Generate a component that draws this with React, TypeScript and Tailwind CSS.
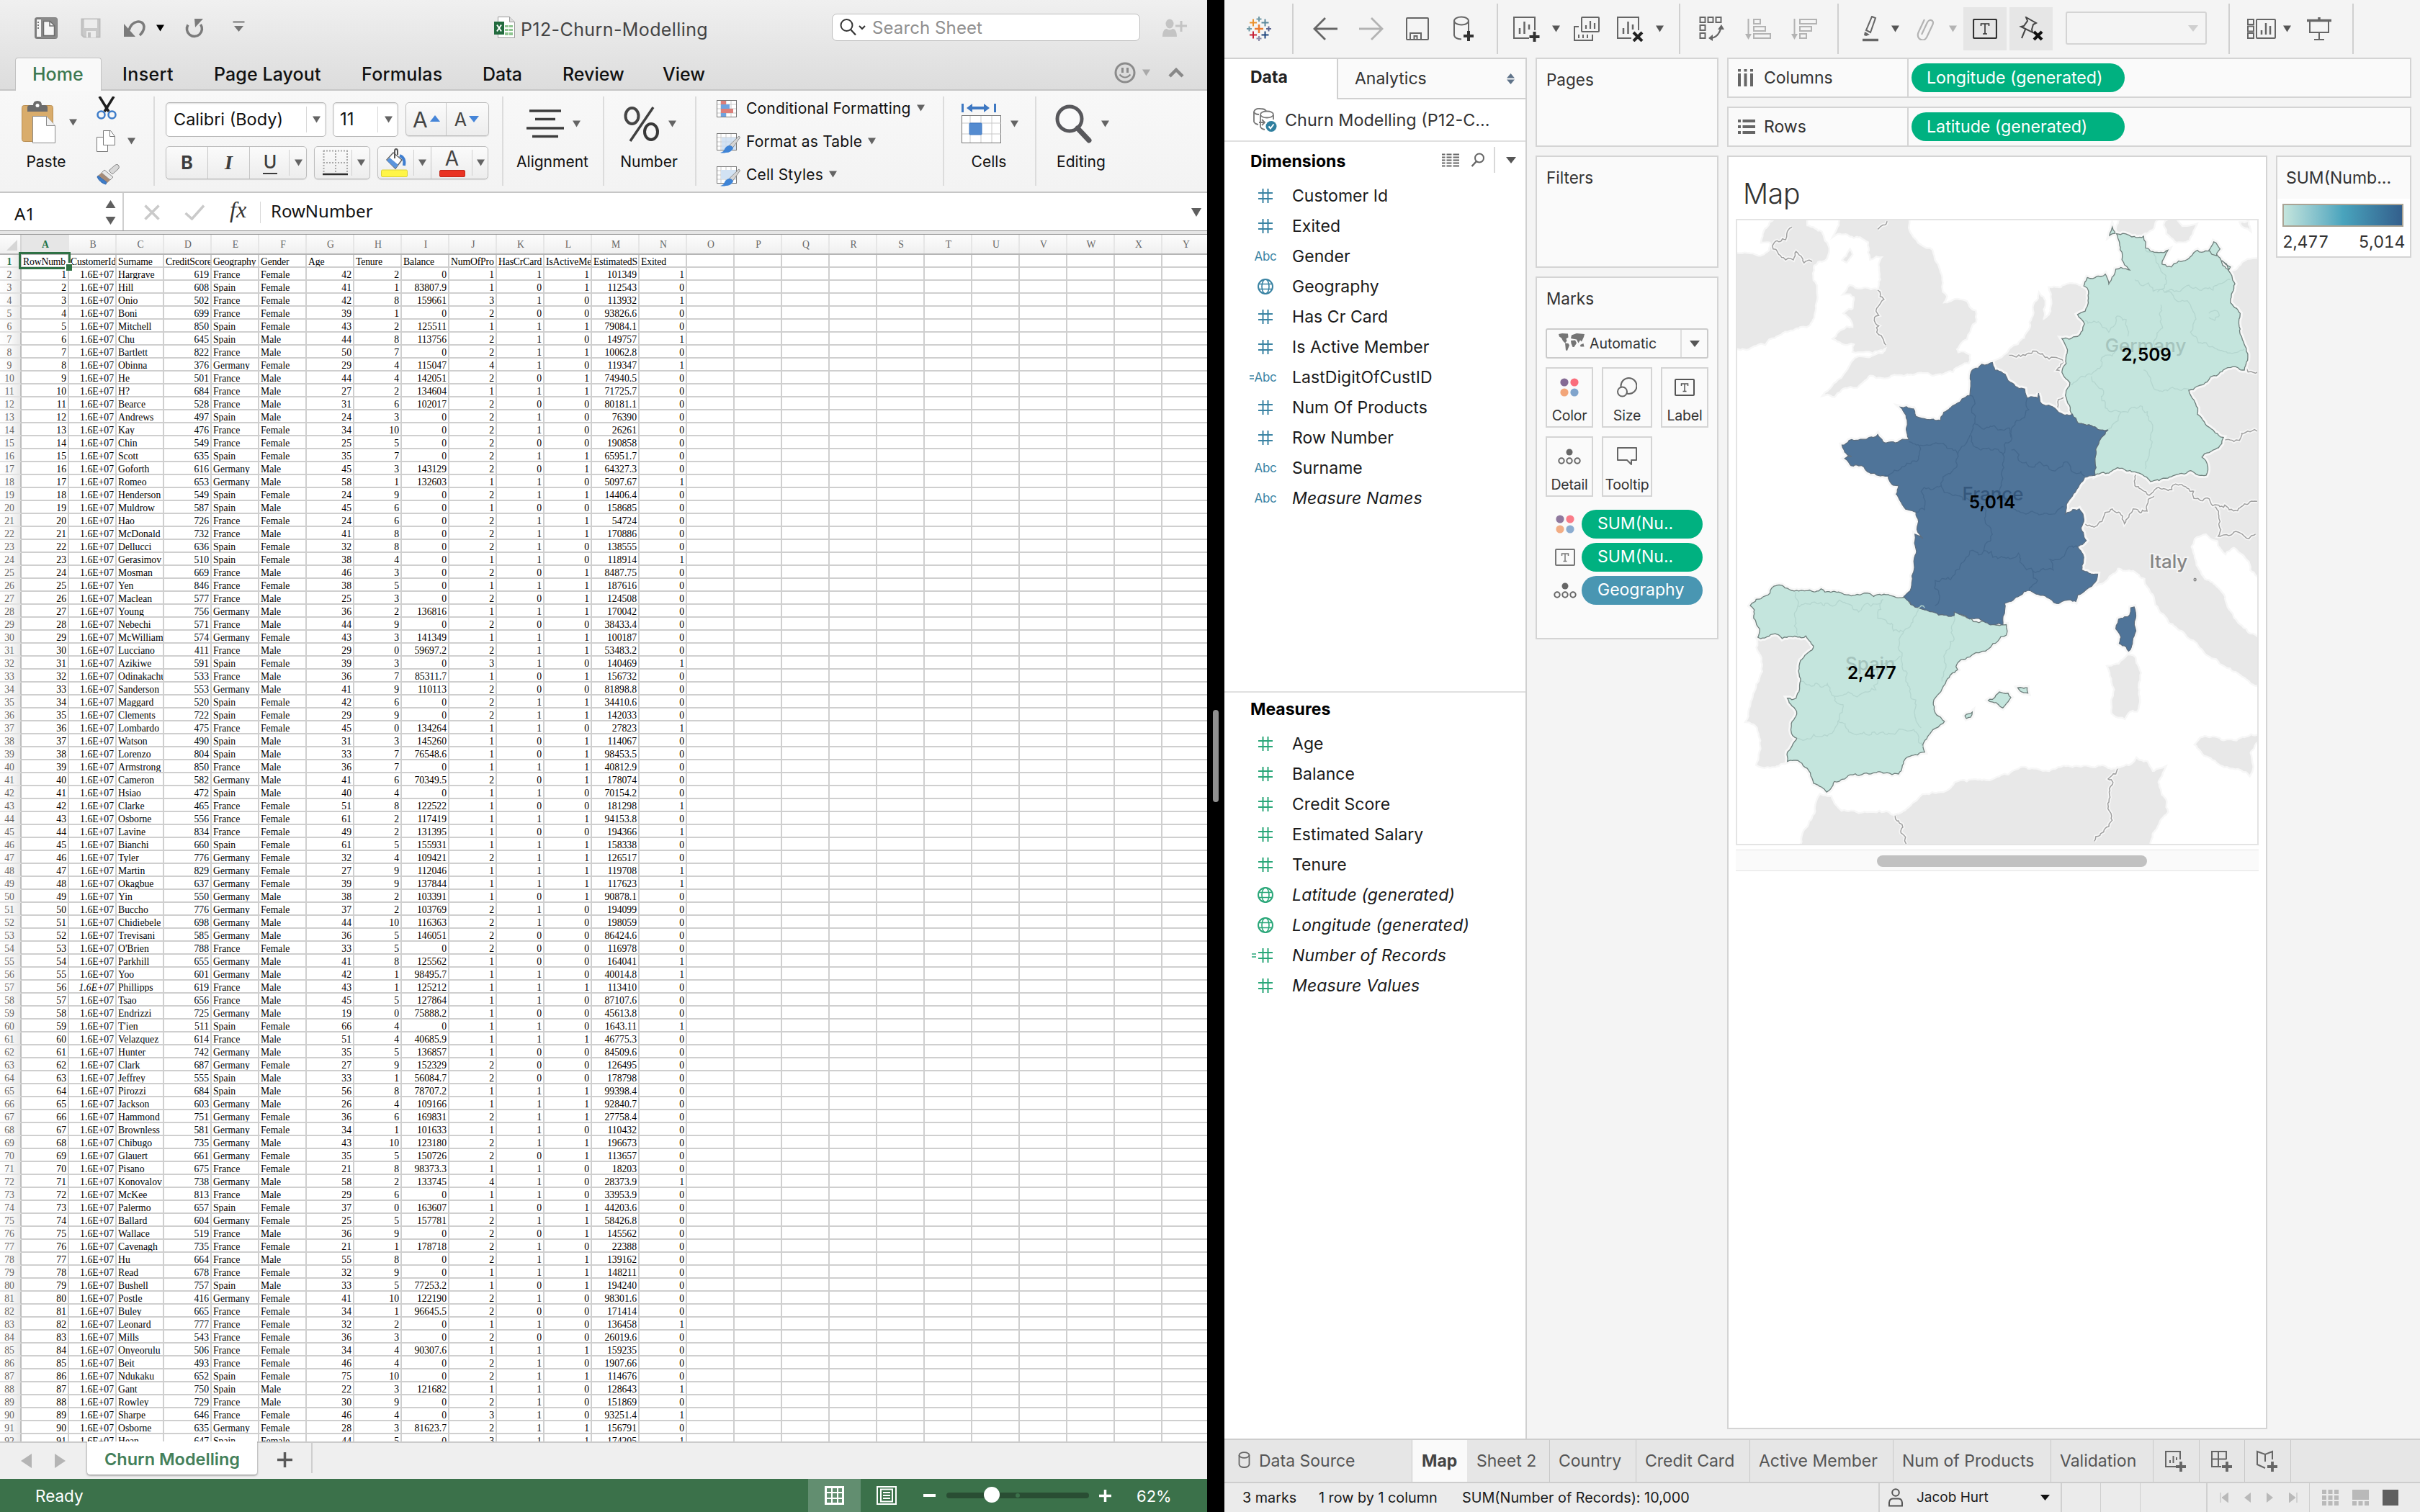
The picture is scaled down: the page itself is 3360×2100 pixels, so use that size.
import React from "react";

/* ------------------------------------------------------------------ */
/* Data                                                                */
/* ------------------------------------------------------------------ */

const HEADERS = ["RowNumb", "CustomerId", "Surname", "CreditScore", "Geography", "Gender", "Age", "Tenure", "Balance", "NumOfPro", "HasCrCard", "IsActiveMe", "EstimatedS", "Exited"];

const RAW = `Hargrave,619,F,F,42,2,0,1,1,1,101349,1
Hill,608,S,F,41,1,83807.9,1,0,1,112543,0
Onio,502,F,F,42,8,159661,3,1,0,113932,1
Boni,699,F,F,39,1,0,2,0,0,93826.6,0
Mitchell,850,S,F,43,2,125511,1,1,1,79084.1,0
Chu,645,S,M,44,8,113756,2,1,0,149757,1
Bartlett,822,F,M,50,7,0,2,1,1,10062.8,0
Obinna,376,G,F,29,4,115047,4,1,0,119347,1
He,501,F,M,44,4,142051,2,0,1,74940.5,0
H?,684,F,M,27,2,134604,1,1,1,71725.7,0
Bearce,528,F,M,31,6,102017,2,0,0,80181.1,0
Andrews,497,S,M,24,3,0,2,1,0,76390,0
Kay,476,F,F,34,10,0,2,1,0,26261,0
Chin,549,F,F,25,5,0,2,0,0,190858,0
Scott,635,S,F,35,7,0,2,1,1,65951.7,0
Goforth,616,G,M,45,3,143129,2,0,1,64327.3,0
Romeo,653,G,M,58,1,132603,1,1,0,5097.67,1
Henderson,549,S,F,24,9,0,2,1,1,14406.4,0
Muldrow,587,S,M,45,6,0,1,0,0,158685,0
Hao,726,F,F,24,6,0,2,1,1,54724,0
McDonald,732,F,M,41,8,0,2,1,1,170886,0
Dellucci,636,S,F,32,8,0,2,1,0,138555,0
Gerasimov,510,S,F,38,4,0,1,1,0,118914,1
Mosman,669,F,M,46,3,0,2,0,1,8487.75,0
Yen,846,F,F,38,5,0,1,1,1,187616,0
Maclean,577,F,M,25,3,0,2,0,1,124508,0
Young,756,G,M,36,2,136816,1,1,1,170042,0
Nebechi,571,F,M,44,9,0,2,0,0,38433.4,0
McWilliam,574,G,F,43,3,141349,1,1,1,100187,0
Lucciano,411,F,M,29,0,59697.2,2,1,1,53483.2,0
Azikiwe,591,S,F,39,3,0,3,1,0,140469,1
Odinakachu,533,F,M,36,7,85311.7,1,0,1,156732,0
Sanderson,553,G,M,41,9,110113,2,0,0,81898.8,0
Maggard,520,S,F,42,6,0,2,1,1,34410.6,0
Clements,722,S,F,29,9,0,2,1,1,142033,0
Lombardo,475,F,F,45,0,134264,1,1,0,27823,1
Watson,490,S,M,31,3,145260,1,0,1,114067,0
Lorenzo,804,S,M,33,7,76548.6,1,0,1,98453.5,0
Armstrong,850,F,M,36,7,0,1,1,1,40812.9,0
Cameron,582,G,M,41,6,70349.5,2,0,1,178074,0
Hsiao,472,S,M,40,4,0,1,1,0,70154.2,0
Clarke,465,F,F,51,8,122522,1,0,0,181298,1
Osborne,556,F,F,61,2,117419,1,1,1,94153.8,0
Lavine,834,F,F,49,2,131395,1,0,0,194366,1
Bianchi,660,S,F,61,5,155931,1,1,1,158338,0
Tyler,776,G,F,32,4,109421,2,1,1,126517,0
Martin,829,G,F,27,9,112046,1,1,1,119708,1
Okagbue,637,G,F,39,9,137844,1,1,1,117623,1
Yin,550,G,M,38,2,103391,1,0,1,90878.1,0
Buccho,776,G,F,37,2,103769,2,1,0,194099,0
Chidiebele,698,G,M,44,10,116363,2,1,0,198059,0
Trevisani,585,G,M,36,5,146051,2,0,0,86424.6,0
O'Brien,788,F,F,33,5,0,2,0,0,116978,0
Parkhill,655,G,M,41,8,125562,1,0,0,164041,1
Yoo,601,G,M,42,1,98495.7,1,1,0,40014.8,1
Phillipps,619,F,M,43,1,125212,1,1,1,113410,0
Tsao,656,F,M,45,5,127864,1,1,0,87107.6,0
Endrizzi,725,G,M,19,0,75888.2,1,0,0,45613.8,0
T'ien,511,S,F,66,4,0,1,1,0,1643.11,1
Velazquez,614,F,M,51,4,40685.9,1,1,1,46775.3,0
Hunter,742,G,M,35,5,136857,1,0,0,84509.6,0
Clark,687,G,F,27,9,152329,2,0,0,126495,0
Jeffrey,555,S,M,33,1,56084.7,2,0,0,178798,0
Pirozzi,684,S,M,56,8,78707.2,1,1,1,99398.4,0
Jackson,603,G,M,26,4,109166,1,1,1,92840.7,0
Hammond,751,G,F,36,6,169831,2,1,1,27758.4,0
Brownless,581,G,F,34,1,101633,1,1,0,110432,0
Chibugo,735,G,M,43,10,123180,2,1,1,196673,0
Glauert,661,G,F,35,5,150726,2,0,1,113657,0
Pisano,675,F,F,21,8,98373.3,1,1,0,18203,0
Konovalov,738,G,M,58,2,133745,4,1,0,28373.9,1
McKee,813,F,M,29,6,0,1,1,0,33953.9,0
Palermo,657,S,F,37,0,163607,1,0,1,44203.6,0
Ballard,604,G,F,25,5,157781,2,1,1,58426.8,0
Wallace,519,F,M,36,9,0,2,0,1,145562,0
Cavenagh,735,F,F,21,1,178718,2,1,0,22388,0
Hu,664,F,M,55,8,0,2,1,1,139162,0
Read,678,F,F,32,9,0,1,1,1,148211,0
Bushell,757,S,M,33,5,77253.2,1,0,1,194240,0
Postle,416,G,F,41,10,122190,2,1,0,98301.6,0
Buley,665,F,F,34,1,96645.5,2,0,0,171414,0
Leonard,777,F,F,32,2,0,1,1,0,136458,1
Mills,543,F,F,36,3,0,2,0,0,26019.6,0
Onyeorulu,506,F,F,34,4,90307.6,1,1,1,159235,0
Beit,493,F,F,46,4,0,2,1,0,1907.66,0
Ndukaku,652,S,F,75,10,0,2,1,1,114676,0
Gant,750,S,M,22,3,121682,1,1,0,128643,1
Rowley,729,F,M,30,9,0,2,1,0,151869,0
Sharpe,646,F,F,46,4,0,3,1,0,93251.4,1
Osborne,635,G,F,28,3,81623.7,2,1,1,156791,0
Hean,647,S,F,44,5,0,3,1,1,174205,1`;

const GEO: Record<string, string> = { F: "France", S: "Spain", G: "Germany" };
const ROWS: string[][] = RAW.split("\n").map((line, i) => {
  const [name, score, geo, sex, ...rest] = line.split(",");
  return [String(i + 1), "1.6E+07", name, score, GEO[geo], sex === "F" ? "Female" : "Male", ...rest];
});
const LETTERS = "ABCDEFGHIJKLMNOPQRSTUVWX".split("");
const TEXT_COLS = [2, 4, 5];

/* ------------------------------------------------------------------ */
/* Shared bits                                                         */
/* ------------------------------------------------------------------ */

type IcProps = { w: number; h: number; className?: string; children: React.ReactNode };
const Ic = ({ w, h, className = "", children }: IcProps) => (
  <svg width={w} height={h} viewBox={`0 0 ${w} ${h}`} fill="none" className={`block shrink-0 ${className}`}>
    {children}
  </svg>
);

const Caret = ({ className = "text-[#646464]" }: { className?: string }) => (
  <Ic w={11} h={10} className={className}>
    <path d="M0 0.5H11L5.5 9.5Z" fill="currentColor" />
  </Ic>
);

/* ------------------------------------------------------------------ */
/* Excel: title bar, tabs, ribbon                                      */
/* ------------------------------------------------------------------ */

const TitleBar = () => (
  <div className="flex h-[78px] items-center">
    <Ic w={32} h={30} className="ml-[48px]">
      <rect x="1.5" y="1.5" width="29" height="27" rx="2" fill="#f4f4f4" stroke="#7d7d7d" strokeWidth="3" />
      <rect x="9" y="1" width="22" height="28" fill="#8a8a8a" />
      <path d="M4 7h2M4 11h2M4 15h2" stroke="#777" strokeWidth="2" />
      <path d="M12.5 5.5h9l6 6v14h-15z" fill="#f6f6f6" stroke="#6d6d6d" strokeWidth="1.5" />
      <path d="M21 5.5v6.500h6.500" stroke="#6d6d6d" strokeWidth="1.5" />
    </Ic>
    <Ic w={28} h={28} className="ml-[32px]">
      <path d="M1.500 1.500h25v25h-22l-3-3z" fill="#c9c9c9" stroke="#bdbdbd" strokeWidth="2" />
      <rect x="5" y="2" width="18" height="12" fill="#ececec" />
      <rect x="8" y="18" width="13" height="9" fill="#ececec" />
      <rect x="10" y="20" width="4" height="7" fill="#c0c0c0" />
    </Ic>
    <Ic w={32} h={26} className="ml-[31px] text-[#7b7b7b]">
      <path d="M1 7v18h16z" fill="currentColor" />
      <path d="M8 16C12 2 28 0 29 11c0 6-3 9-6 12" stroke="currentColor" strokeWidth="3.500" />
    </Ic>
    <Caret className="ml-[14px]" />
    <Ic w={26} h={28} className="ml-[29px] text-[#7b7b7b]">
      <path d="M4 9.500A10.500 10.500 0 1 0 21.500 9" stroke="currentColor" strokeWidth="3.500" />
      <path d="M13 1h12L14 13z" fill="currentColor" />
    </Ic>
    <Ic w={18} h={16} className="ml-[40px] mt-[-4px] text-[#757575]">
      <path d="M0.500 1.500h16" stroke="currentColor" strokeWidth="2" />
      <path d="M2 7h13l-6.500 8z" fill="currentColor" />
    </Ic>
    <Ic w={29} h={30} className="ml-[345px] mt-[-2px]">
      <path d="M5.500 0.500h16l7 7v22h-23z" fill="#fff" stroke="#9a9a9a" />
      <path d="M21.500 0.500v7h7" fill="#ddd" stroke="#9a9a9a" />
      <path d="M15 12h5v3h-5zM21 12h5v3h-5zM15 17h5v3h-5zM21 17h5v3h-5zM15 22h5v4h-5zM21 22h5v4h-5z" fill="#8fc591" />
      <rect y="7" width="14" height="18" fill="#226b3e" />
      <path d="M4 11.500l6 9M10 11.500l-6 9" stroke="#fff" strokeWidth="2" />
    </Ic>
    <span className="ml-[8px] mt-[4px] w-[262px] whitespace-nowrap text-[25px] leading-[30px] tracking-[0.4px] text-[#444]">P12-Churn-Modelling</span>
    <div className="ml-[170px] mt-[-2px] flex h-[38px] w-[428px] items-center rounded-[7px] border border-[#bcbcbc] bg-white">
      <Ic w={24} h={26} className="ml-[10px]">
        <circle cx="9.500" cy="10" r="8" stroke="#333" strokeWidth="2" />
        <path d="M15 16l7 7.500" stroke="#333" strokeWidth="2.200" />
      </Ic>
      <Ic w={10} h={7} className="ml-[2px]">
        <path d="M1 1l4 4 4-4" stroke="#333" strokeWidth="2" />
      </Ic>
      <span className="ml-[9px] mt-[2px] text-[24px] leading-[30px] tracking-[0.1px] text-[#8f8f8f]">Search Sheet</span>
    </div>
    <Ic w={34} h={26} className="ml-[31px] text-[#c4c4c4]">
      <ellipse cx="10" cy="7" rx="5.500" ry="6.500" fill="currentColor" />
      <path d="M0 25c0-8 3-11 6-11q4 3 8 0c3 0 6 3 6 11z" fill="currentColor" />
      <path d="M18 10h16M26 3v15" stroke="currentColor" strokeWidth="3" />
    </Ic>
  </div>
);

const TabRow = () => (
  <div className="flex h-[48px] items-end border-b-2 border-[#c6c6c6] text-[25px] font-medium leading-[42px] text-[#111]">
    <div className="mb-[-2px] ml-[21px] h-[46px] w-[120px] rounded-t-[4px] border border-b-0 border-[#c2c2c2] bg-[#f9f9f9] pl-[23px] leading-[45px] text-[#3d7850]">Home</div>
    <span className="ml-[29px] w-[127px] tracking-[0.4px]">Insert</span>
    <span className="w-[205px] tracking-[0.1px]">Page Layout</span>
    <span className="w-[168px] tracking-[0.3px]">Formulas</span>
    <span className="w-[111px]">Data</span>
    <span className="w-[139px]">Review</span>
    <span className="w-[626px]">View</span>
    <Ic w={32} h={32} className="mb-[7px]">
      <circle cx="16" cy="16" r="13" fill="#dcdcdc" stroke="#8b8b8b" strokeWidth="3" />
      <path d="M12.500 9v7M19.500 9v7" stroke="#8b8b8b" strokeWidth="3" />
      <path d="M8.500 18.500q7.500 8 15 0" stroke="#8b8b8b" strokeWidth="2" />
    </Ic>
    <Caret className="mb-[18px] ml-[8px] text-[#a9a9a9]" />
    <Ic w={22} h={14} className="mb-[16px] ml-[25px]">
      <path d="M2 12l9-9 9 9" stroke="#888" strokeWidth="4.500" />
    </Ic>
  </div>
);

const Sep = () => <div className="mt-[8px] h-[124px] w-[2px] shrink-0 bg-[#dcdcdc]" />;

const BigGroup = ({ label, className, children }: { label: string; className: string; children: React.ReactNode }) => (
  <div className={`shrink-0 pt-[15px] ${className}`}>
    <div className="flex h-[62px] items-center justify-center gap-[12px]">
      {children}
      <Caret />
    </div>
    <div className="mt-[9px] pr-[2px] text-center text-[21px] leading-[26px] text-[#111]">{label}</div>
  </div>
);

const StyleIcon = ({ kind }: { kind: number }) => (
  <Ic w={33} h={32}>
    <rect x="0.500" y="4.500" width="27" height="23" fill="#fff" stroke="#777" />
    <path d="M1 10h26M1 16h26M1 22h26M6 5v22M13 5v22M20 5v22" stroke="#c9c9c9" />
    {kind === 0 && (
      <>
        <path d="M6 5h7v5H6zM6 16h17v6H6z" fill="#dd7f7a" />
        <path d="M6 10h12v6H6zM6 22h7v5H6z" fill="#6fa3e0" />
      </>
    )}
    {kind === 1 && <path d="M7 10h20v17H7z" fill="#c9dcf0" opacity="0.8" />}
    {kind === 2 && <path d="M6 9h21v13H6z" fill="#d2e2f3" />}
    {kind > 0 && (
      <>
        <path d="M31 8l1.500 2-10 14-5-3z" fill="#d5d5d5" stroke="#8e8e8e" />
        <path d="M17 21q5 0 6 4-3 6-10 6-5 1-8 0 5-1 6-5 2-4 6-5z" fill="#3f84d6" />
      </>
    )}
  </Ic>
);

const BTN = "flex items-center rounded-[5px] border border-[#bdbdbd] bg-linear-to-b from-[#fbfbfb] to-[#ededed] shadow-[0_1px_1px_rgba(0,0,0,0.12)]";

const Ribbon = () => (
  <div className="flex h-[142px] border-b-2 border-[#c6c6c6] bg-linear-to-b from-[#f8f8f8] to-[#f3f3f3]">
    <div className="w-[128px] pt-[14px]">
      <div className="flex items-center pl-[30px]">
        <Ic w={48} h={60}>
          <rect x="0.500" y="6.500" width="43" height="50" rx="3" fill="#d9ac6b" stroke="#b98e52" />
          <path d="M8 15v-6q0-3 4-3h4q0-6 6-6t6 6h4q4 0 4 3v6z" fill="#6b6b6b" />
          <circle cx="22" cy="6.500" r="2.500" fill="#fff" />
          <path d="M15.500 21.500h19l12 13v24h-31z" fill="#fff" stroke="#8b8b8b" />
          <path d="M34.500 21.500v13h12" fill="#f0f0f0" stroke="#8b8b8b" />
        </Ic>
        <Caret className="ml-[18px] text-[#646464]" />
      </div>
      <div className="mt-[12px] text-center text-[21px] leading-[26px] text-[#111]">Paste</div>
    </div>
    <div className="flex w-[85px] flex-col pl-[6px] pt-[8px]">
      <Ic w={28} h={32}>
        <path d="M4 0l13 21M24 0L11 21" stroke="#1d1d1d" strokeWidth="3.500" />
        <circle cx="6.500" cy="25.500" r="5" stroke="#3d7cc9" strokeWidth="2.500" />
        <circle cx="21.500" cy="25.500" r="5" stroke="#3d7cc9" strokeWidth="2.500" />
      </Ic>
      <div className="mt-[15px] flex items-center">
        <Ic w={27} h={30}>
          <path d="M0.500 9.500h15v20h-15z" fill="#fff" stroke="#777" />
          <path d="M9.500 0.500h10l6 8v12h-16z" fill="#fff" stroke="#777" />
          <path d="M18.500 0.500v8h7" stroke="#777" />
        </Ic>
        <Caret className="ml-[16px] text-[#646464]" />
      </div>
      <Ic w={32} h={29} className="mt-[17px]">
        <path d="M30 1q3 3 0 6l-8 7-5-5 8-7q3-3 5-1z" fill="#d8d8d8" stroke="#888" />
        <path d="M11 8l12 10-4 4L7 12z" fill="#e8e8e8" stroke="#888" />
        <path d="M7 12l12 10-4 4L2 16z" fill="#a68b77" />
        <path d="M2 16l12 9-1 3q-8-2-12-10z" fill="#3d7cc9" stroke="#3569ac" />
      </Ic>
    </div>
    <Sep />
    <div className="w-[482px] pl-[15px] pt-[16px]">
      <div className="flex">
        <div className="flex h-[48px] w-[223px] items-center rounded-[5px] border border-[#b6b6b6] bg-white shadow-[inset_0_1px_2px_rgba(0,0,0,0.15)]">
          <span className="ml-[10px] w-[184px] whitespace-nowrap text-[23.500px] leading-[30px] text-[#111]">Calibri (Body)</span>
          <div className="h-[36px] w-px bg-[#d8d8d8]" />
          <Caret className="ml-[8px] text-[#646464]" />
        </div>
        <div className="ml-[9px] flex h-[48px] w-[91px] items-center rounded-[5px] border border-[#b6b6b6] bg-white shadow-[inset_0_1px_2px_rgba(0,0,0,0.15)]">
          <span className="ml-[9px] w-[52px] text-[24px] leading-[30px] text-[#111]">11</span>
          <div className="h-[36px] w-px bg-[#d8d8d8]" />
          <Caret className="ml-[9px] text-[#646464]" />
        </div>
        <div className={`${BTN} ml-[10px] h-[47px] w-[116px] text-[#444]`}>
          <span className="ml-[9px] text-[30px] leading-[40px]">A</span>
          <Ic w={14} h={9} className="ml-[3px] mt-[-3px]"><path d="M7 0l7 9H0z" fill="#4585d8" /></Ic>
          <div className="ml-[8px] h-full w-px bg-[#c6c6c6]" />
          <span className="ml-[11px] text-[25px] leading-[40px]">A</span>
          <Ic w={14} h={9} className="ml-[3px]"><path d="M7 9l7-9H0z" fill="#4585d8" /></Ic>
        </div>
      </div>
      <div className="mt-[13px] flex">
        <div className={`${BTN} h-[46px] w-[196px] text-[25px] leading-[40px] text-[#3c3c3c]`}>
          <span className="w-[57px] text-center font-bold">B</span>
          <div className="h-full w-px bg-[#c6c6c6]" />
          <span className="w-[57px] text-center font-['Liberation_Serif'] text-[28px] font-bold italic">I</span>
          <div className="h-full w-px bg-[#c6c6c6]" />
          <span className="ml-[18px] w-[20px] border-b-2 border-[#3c3c3c] text-center font-medium leading-[30px]">U</span>
          <div className="ml-[16px] h-[36px] w-px bg-[#d0d0d0]" />
          <Caret className="ml-[7px] text-[#646464]" />
        </div>
        <div className={`${BTN} ml-[10px] h-[46px] w-[78px]`}>
          <Ic w={36} h={36} className="ml-[11px]">
            <path d="M1 1.500h34M1 18h34M1.500 1v31M18 1v31M34 1v31" stroke="#a8a8a8" strokeWidth="2" strokeDasharray="2 2" />
            <path d="M0 34h35" stroke="#2d2d2d" strokeWidth="2.500" />
          </Ic>
          <div className="ml-[4px] h-[36px] w-px bg-[#d0d0d0]" />
          <Caret className="ml-[7px] text-[#646464]" />
        </div>
        <div className={`${BTN} ml-[10px] h-[46px] w-[154px]`}>
          <Ic w={38} h={40} className="ml-[4px]">
            <path d="M17 6l12 10-9 12L8 16z" fill="#fff" stroke="#666" strokeWidth="1.500" />
            <path d="M12 13l12 10-4 5L8 17z" fill="#5a94dc" />
            <path d="M19 14V4q0-3 2-3t2 3v5" stroke="#555" strokeWidth="2" />
            <path d="M26 10q8 3 6 14" stroke="#3f7ed0" strokeWidth="4" />
            <rect x="0.500" y="30" width="36" height="9.500" rx="1.500" fill="#fff547" stroke="#dcd33a" />
          </Ic>
          <div className="ml-[7px] h-[36px] w-px bg-[#d0d0d0]" />
          <Caret className="ml-[6px] text-[#646464]" />
          <div className="ml-[6px] h-full w-px bg-[#c6c6c6]" />
          <div className="ml-[10px] flex w-[37px] flex-col items-center">
            <span className="text-[28px] leading-[29px] text-[#444]">A</span>
            <div className="mt-[1px] h-[10px] w-[36px] rounded-[2px] border border-[#c02a1c] bg-[#e93323]" />
          </div>
          <div className="ml-[9px] h-[36px] w-px bg-[#d0d0d0]" />
          <Caret className="ml-[6px] text-[#646464]" />
        </div>
      </div>
    </div>
    <Sep />
    <BigGroup label="Alignment" className="w-[138px]">
      <Ic w={52} h={42}>
        <path d="M4 3h44M12 14.500h28M0 27h52M8 38.500h36" stroke="#3d3d3d" strokeWidth="3.500" />
      </Ic>
    </BigGroup>
    <Sep />
    <BigGroup label="Number" className="w-[126px]">
      <Ic w={50} h={50}>
        <ellipse cx="11.500" cy="14" rx="9" ry="11" stroke="#454545" strokeWidth="4" />
        <ellipse cx="38" cy="36" rx="9" ry="11" stroke="#383838" strokeWidth="4" />
        <path d="M41 2L9 49" stroke="#404040" strokeWidth="3.500" />
      </Ic>
    </BigGroup>
    <Sep />
    <div className="flex w-[342px] flex-col gap-[14px] pl-[28px] pt-[9px] text-[21px] leading-[32px] tracking-[0.2px] text-[#111]">
      {["Conditional Formatting", "Format as Table", "Cell Styles"].map((t, i) => (
        <div key={t} className="flex items-center">
          <StyleIcon kind={i} />
          <span className="ml-[8px] whitespace-nowrap">{t}</span>
          <Caret className="ml-[8px] mt-[-3px] text-[#646464]" />
        </div>
      ))}
    </div>
    <Sep />
    <BigGroup label="Cells" className="w-[126px]">
      <Ic w={56} h={56}>
        <path d="M1.500 0v12M46.500 0v12" stroke="#3e78c2" strokeWidth="3" />
        <path d="M7 6l8-6v4h16v-4l8 6-8 6v-4H15v4z" fill="#3e78c2" />
        <rect x="0.500" y="16.500" width="54" height="38" fill="#fff" stroke="#777" />
        <path d="M1 27h54M1 42h54M12 17v37M27 17v37M42 17v37" stroke="#c9c9c9" />
        <rect x="11" y="27" width="17" height="16" rx="1" fill="#548bd0" stroke="#3e78c2" />
      </Ic>
    </BigGroup>
    <Sep />
    <BigGroup label="Editing" className="w-[126px]">
      <Ic w={52} h={54}>
        <circle cx="20" cy="20" r="17" fill="#fafafa" stroke="#58585c" strokeWidth="5" />
        <path d="M31 33l16 17" stroke="#58585c" strokeWidth="7" strokeLinecap="round" />
      </Ic>
    </BigGroup>
  </div>
);

const FormulaBar = () => (
  <div className="flex h-[58px] flex-col">
    <div className="flex h-[52px] bg-white font-['Noto_Sans'] text-[24px] leading-[30px] text-[#111]">
      <div className="flex w-[172px] items-center border-r-2 border-[#cfcfcf]">
        <span className="ml-[20px] mt-[6px] w-[126px]">A1</span>
        <Ic w={15} h={34} className="mt-[2px] text-[#5f5f5f]">
          <path d="M7.500 0l7 11h-14zM7.500 34l7-11h-14z" fill="currentColor" />
        </Ic>
      </div>
      <Ic w={22} h={22} className="ml-[28px] mt-[16px]"><path d="M1.500 1.500l19 19M20.500 1.500l-19 19" stroke="#cacaca" strokeWidth="3.500" /></Ic>
      <Ic w={29} h={22} className="ml-[34px] mt-[16px]"><path d="M1.500 12l9 8L27 1.500" stroke="#cacaca" strokeWidth="3.500" /></Ic>
      <span className="ml-[34px] mt-[8px] w-[42px] font-['Liberation_Serif'] text-[32px] italic text-[#333]">fx</span>
      <div className="mt-[12px] h-[30px] w-px bg-[#d8d8d8]" />
      <span className="ml-[14px] mt-[10px] w-[1278px]">RowNumber</span>
      <Ic w={14} h={12} className="mt-[21px]"><path d="M0 0h14L7 12z" fill="#5f5f5f" /></Ic>
    </div>
    <div className="h-[6px] border-y border-[#979797] bg-[#e6e6e6]" />
  </div>
);

/* ------------------------------------------------------------------ */
/* Excel: worksheet                                                    */
/* ------------------------------------------------------------------ */

const CELL = "h-[18px] w-[66px] shrink-0 overflow-hidden whitespace-nowrap border-b-2 border-r-2 border-[#cfcfcf]";

const Row = ({ n, cells }: { n: number; cells: string[] }) => (
  <div className="flex h-[18px]">
    <div className={`h-[18px] w-[30px] shrink-0 border-b-2 border-r-2 border-b-[#e0e0e0] border-r-[#bdbdbd] bg-linear-to-r from-white via-[#fafafa] to-[#e8e8e8] text-center ${n === 1 ? "font-bold text-[#217346]" : "text-[#666]"}`}>
      <span className="mr-[2px]">{n}</span>
    </div>
    {LETTERS.map((l, i) => (
      <div key={l} className={`${CELL} ${n > 1 && !TEXT_COLS.includes(i) ? "pr-[2px] text-right" : n === 1 ? "pl-[2px] tracking-[-0.15px]" : "pl-[2px]"} ${n === 57 && i === 1 ? "italic" : ""}`}>
        {cells[i]}
      </div>
    ))}
    <div className="h-[18px] w-[62px] shrink-0 border-b-2 border-[#cfcfcf]" />
  </div>
);

const Sheet = () => (
  <div className="relative h-[1676px] overflow-hidden bg-white font-['Liberation_Serif'] text-[13.700px] leading-[19px] text-black">
    <div className="flex h-[28px] border-b-2 border-[#b5b5b5] bg-linear-to-b from-[#fdfdfd] to-[#f0f0f0] leading-[27px] text-[#666]">
      <div className="flex w-[30px] items-end justify-end border-r-2 border-[#d5d5d5] pb-[4px] pr-[4px]">
        <Ic w={15} h={15}><path d="M15 0v15H0z" fill="#d6d6d6" /></Ic>
      </div>
      {LETTERS.map((l, i) => (
        <div key={l} className={`w-[66px] border-r-2 border-[#e6e6e6] pl-[2px] text-center ${i === 0 ? "bg-[#e6e6e6] font-bold text-[#217346]" : ""}`}>{l}</div>
      ))}
      <div className="w-[62px] pl-[28px]">Y</div>
    </div>
    <Row n={1} cells={HEADERS} />
    {ROWS.map((r, i) => <Row key={i} n={i + 2} cells={r} />)}
    <div className="absolute left-[26px] top-[24px] h-[24px] w-[72px] border-[3px] border-[#2f7145]" />
    <div className="absolute left-[90px] top-[39px] h-[11px] w-[10px] border-l-2 border-t-2 border-white bg-[#2f7145]" />
  </div>
);

const SheetTabs = () => (
  <div className="flex h-[52px] border-t-2 border-[#cbcbcb] bg-[#efefef]">
    <Ic w={15} h={20} className="ml-[29px] mt-[15px]"><path d="M15 0v20L0 10z" fill="#b4b4b4" /></Ic>
    <Ic w={15} h={20} className="ml-[32px] mt-[15px]"><path d="M0 0v20l15-10z" fill="#b4b4b4" /></Ic>
    <div className="mt-[-2px] ml-[30px] h-[46px] w-[236px] rounded-b-[4px] bg-white text-center text-[23.500px] font-semibold leading-[49px] text-[#44805a] shadow-[0_1px_3px_rgba(0,0,0,0.5)]">Churn Modelling</div>
    <Ic w={21} h={21} className="ml-[28px] mt-[13px]"><path d="M0 10.500h21M10.500 0v21" stroke="#5a5a5a" strokeWidth="3.500" /></Ic>
    <div className="ml-[26px] h-[42px] w-[2px] bg-[#cfcfcf]" />
  </div>
);

const ExcelStatus = () => (
  <div className="flex h-[46px] items-center bg-[#3b714a] text-[22.500px] leading-[30px] text-white">
    <span className="ml-[49px] mt-[2px] w-[1073px]">Ready</span>
    <div className="flex h-full w-[73px] items-center justify-center bg-[#628e70]">
      <Ic w={27} h={26}>
        <rect width="27" height="26" fill="#fff" />
        <path d="M3 3h6v5H3zM11 3h6v5h-6zM19 3h5v5h-5zM3 10h6v6H3zM11 10h6v6h-6zM19 10h5v6h-5zM3 18h6v5H3zM11 18h6v5h-6zM19 18h5v5h-5z" fill="#628e70" />
      </Ic>
    </div>
    <Ic w={28} h={26} className="ml-[22px]">
      <rect x="1" y="1" width="26" height="24" stroke="#fff" strokeWidth="2" />
      <rect x="6" y="4.500" width="16" height="17" stroke="#fff" strokeWidth="2" />
      <path d="M9 9h10M9 13h10M9 17h10" stroke="#fff" strokeWidth="2" />
    </Ic>
    <div className="ml-[37px] h-[4px] w-[17px] bg-white" />
    <div className="relative ml-[15px] h-[8px] w-[198px] rounded-full bg-[#294d33]">
      <div className="absolute left-[52px] top-[-8px] h-[22px] w-[22px] rounded-full bg-white" />
      <div className="absolute left-[96px] top-[1px] h-[6px] w-[6px] rounded-full bg-[#3b714a]" />
    </div>
    <Ic w={17} h={17} className="ml-[14px]"><path d="M0 8.500h17M8.500 0v17" stroke="#fff" strokeWidth="3.500" /></Ic>
    <span className="ml-[35px] mt-[2px] text-[22px]">62%</span>
  </div>
);

const Excel = () => (
  <div className="flex h-full w-[1676px] shrink-0 flex-col overflow-hidden">
    <div className="bg-linear-to-b from-[#f0f0f0] to-[#dcdcdc]">
      <TitleBar />
      <TabRow />
    </div>
    <Ribbon />
    <FormulaBar />
    <Sheet />
    <SheetTabs />
    <ExcelStatus />
  </div>
);

/* ------------------------------------------------------------------ */
/* Tableau: toolbar                                                    */
/* ------------------------------------------------------------------ */

const TSep = ({ className }: { className: string }) => <div className={`h-[70px] w-[2px] shrink-0 bg-[#d0d0d0] ${className}`} />;
const G = "#666";

const Plus = ({ x, y, r, c, s = 2 }: { x: number; y: number; r: number; c: string; s?: number }) => (
  <path d={`M${x - r} ${y}h${2 * r}M${x} ${y - r}v${2 * r}`} stroke={c} strokeWidth={s} />
);

const TextGlyph = ({ className = "", c = "#555" }: { className?: string; c?: string }) => (
  <Ic w={28} h={24} className={className}>
    <rect x="1" y="1" width="26" height="22" rx="1" stroke={c} strokeWidth="2" />
    <path d="M9.500 10V7h9v3M14 7v10M11.500 17.500h5" stroke={c} strokeWidth="1.500" />
  </Ic>
);

const Toolbar = () => (
  <div className="flex h-[80px] shrink-0 items-center bg-[#f4f4f4]">
    <Ic w={34} h={34} className="ml-[31px]">
      <Plus x={17} y={17} r={6} c="#eb7b30" s={2.500} />
      <Plus x={9} y={8.500} r={5} c="#eb912c" />
      <Plus x={25.500} y={8.500} r={5} c="#5b879b" />
      <Plus x={9} y={25.500} r={5} c="#c72035" />
      <Plus x={25.500} y={25.500} r={5} c="#1f457e" />
      <Plus x={17} y={3.500} r={3.500} c="#7199a6" />
      <Plus x={17} y={30.500} r={3.500} c="#8d8ba8" />
      <Plus x={3.500} y={17} r={3.500} c="#7199a6" />
      <Plus x={30.500} y={17} r={3.500} c="#5b6591" />
    </Ic>
    <TSep className="ml-[29px]" />
    <Ic w={34} h={34} className="ml-[27px]"><path d="M34 17H2M17 2L2 17l15 15" stroke={G} strokeWidth="2.800" /></Ic>
    <Ic w={34} h={34} className="ml-[30px]"><path d="M0 17h32M17 2l15 15-15 15" stroke="#b3b3b3" strokeWidth="2.800" /></Ic>
    <Ic w={32} h={32} className="ml-[31px]">
      <rect x="1" y="1" width="30" height="30" rx="1" stroke={G} strokeWidth="2" />
      <path d="M6 31v-9h15v9M11.500 31v-5h4v5" stroke={G} strokeWidth="2" />
    </Ic>
    <Ic w={30} h={36} className="ml-[34px]">
      <ellipse cx="11" cy="7" rx="10" ry="5.500" stroke={G} strokeWidth="2" />
      <path d="M1 7v20q1 5 10 5.500M21 7v15" stroke={G} strokeWidth="2" />
      <Plus x={21} y={28} r={7} c="#333" s={4} />
    </Ic>
    <TSep className="ml-[30px]" />
    <Ic w={37} h={36} className="ml-[21px]">
      <path d="M22 31H1V2h29v18" stroke={G} strokeWidth="2" />
      <path d="M9 25v-8M15.500 25V8M22 19v-7" stroke={G} strokeWidth="2.500" />
      <Plus x={29.500} y={29} r={7} c="#333" s={4} />
    </Ic>
    <Caret className="ml-[17px] text-[#555]" />
    <Ic w={36} h={34} className="ml-[19px]">
      <rect x="11" y="1" width="24" height="20" rx="1" stroke={G} strokeWidth="2" />
      <path d="M17 17v-5M23 17V6M29 17V9" stroke={G} strokeWidth="2.200" />
      <path d="M7 14H1v19h25v-8M7 30v-5M13 30v-5M19 30v-5" stroke={G} strokeWidth="2" />
    </Ic>
    <Ic w={38} h={36} className="ml-[24px]">
      <path d="M20 31H1V2h29v18" stroke={G} strokeWidth="2" />
      <path d="M9 25v-8M15.500 25V8M22 19v-7" stroke={G} strokeWidth="2.500" />
      <path d="M23 23l12 12M35 23L23 35" stroke="#222" strokeWidth="4" />
    </Ic>
    <Caret className="ml-[16px] text-[#555]" />
    <TSep className="ml-[21px]" />
    <Ic w={36} h={36} className="ml-[26px]">
      <path d="M1.500 2h7v7h-7zM12.500 2h7v7h-7zM23.500 2h7v7h-7zM1.500 13h7v7h-7zM1.500 24h7v7h-7z" stroke={G} strokeWidth="2" />
      <path d="M15 31q12 0 16-16" stroke={G} strokeWidth="2.200" />
      <path d="M13 31l6-5v9zM31 12l-5 7h9z" fill={G} />
    </Ic>
    <Ic w={37} h={30} className="ml-[28px]">
      <path d="M4.500 1v26" stroke="#b3b3b3" strokeWidth="2" />
      <path d="M0 22h9l-4.500 8z" fill="#b3b3b3" />
      <path d="M12 2h9v6h-9zM12 12h16v6H12zM12 22h23v6H12z" stroke="#b3b3b3" strokeWidth="2" />
    </Ic>
    <Ic w={37} h={30} className="ml-[27px]">
      <path d="M4.500 1v26" stroke="#b3b3b3" strokeWidth="2" />
      <path d="M0 22h9l-4.500 8z" fill="#b3b3b3" />
      <path d="M12 2h23v6H12zM12 12h16v6H12zM12 22h9v6h-9z" stroke="#b3b3b3" strokeWidth="2" />
    </Ic>
    <TSep className="ml-[27px]" />
    <Ic w={24} h={36} className="ml-[32px]">
      <path d="M14 1l5 2-7 20-6-3z" stroke={G} strokeWidth="2" />
      <path d="M4 22l7 4-5 2-3-1z" fill={G} />
      <path d="M1 33.500h22" stroke={G} strokeWidth="3.500" />
    </Ic>
    <Caret className="ml-[17px] text-[#555]" />
    <Ic w={26} h={32} className="ml-[23px]">
      <path d="M8 24l8-17q3-5 7-2 2 2 0 6l-8 17q-4 6-10 2-4-4-1-10l8-17" stroke="#b3b3b3" strokeWidth="2.200" />
    </Ic>
    <Caret className="ml-[20px] text-[#b3b3b3]" />
    <div className="ml-[9px] flex h-[60px] w-[60px] items-center justify-center bg-[#e6e6e6]">
      <Ic w={34} h={28}>
        <rect x="1" y="1" width="32" height="26" rx="1.500" stroke="#333" strokeWidth="2.200" />
        <path d="M11.500 10V7h11v3M17 7v14M14 21h6" stroke="#333" strokeWidth="1.600" />
      </Ic>
    </div>
    <div className="ml-[4px] flex h-[60px] w-[60px] items-center justify-center bg-[#e6e6e6]">
      <Ic w={34} h={34}>
        <path d="M10 1l14 8-4 2-2 7 1 4-16-8 4-1 5-7zM9 18L4 30" stroke="#444" strokeWidth="2" />
        <path d="M21 21l11 11M32 21L21 32" stroke="#111" strokeWidth="4" />
      </Ic>
    </div>
    <div className="ml-[18px] mt-[-2px] flex h-[46px] w-[196px] items-center justify-end rounded-[3px] border-2 border-[#d4d4d4] pr-[10px]">
      <Ic w={14} h={9}><path d="M0 0h14L7 9z" fill="#cfcfcf" /></Ic>
    </div>
    <TSep className="ml-[30px]" />
    <Ic w={40} h={28} className="ml-[24px]">
      <path d="M1 1h8v7H1zM1 10.500h8v7H1zM1 20h8v7H1z" stroke={G} strokeWidth="2" />
      <rect x="13" y="1" width="26" height="26" rx="1" stroke={G} strokeWidth="2" />
      <path d="M20 22v-6M26 22V6M32 22V10" stroke={G} strokeWidth="2.500" />
    </Ic>
    <Caret className="ml-[10px] text-[#555]" />
    <Ic w={34} h={34} className="ml-[22px]">
      <path d="M17 1v4M0 5.500h34" stroke={G} strokeWidth="3.500" />
      <path d="M4 7v15h26V7M17 22v9M10 32h14" stroke={G} strokeWidth="2" />
    </Ic>
    <TSep className="ml-[29px]" />
  </div>
);

/* ------------------------------------------------------------------ */
/* Tableau: data pane                                                  */
/* ------------------------------------------------------------------ */

const FieldIcon = ({ kind, c }: { kind: string; c: string }) => {
  if (kind.endsWith("Abc"))
    return (
      <div className="flex items-center text-[17px] leading-[20px] tracking-[-0.3px] text-[#3a83a3]">
        {kind === "=Abc" && (
          <Ic w={6} h={6} className="ml-[-7px] mr-px">
            <path d="M0 1h6M0 5h6" stroke={c} strokeWidth="1.500" />
          </Ic>
        )}
        <span>Abc</span>
      </div>
    );
  if (kind === "globe")
    return (
      <Ic w={24} h={24}>
        <circle cx="12" cy="12" r="10" stroke={c} strokeWidth="2" />
        <ellipse cx="12" cy="12" rx="5" ry="10" stroke={c} strokeWidth="1.600" />
        <path d="M3 8.500h18M3 15.500h18" stroke={c} strokeWidth="1.600" />
      </Ic>
    );
  return (
    <Ic w={28} h={22} className="overflow-visible">
      <path d="M10.500 1v20M17.500 1v20M4 7h20M4 15h20" stroke={c} strokeWidth="2" />
      {kind === "=#" && <path d="M-5 9h6M-5 13h6" stroke={c} strokeWidth="1.600" />}
    </Ic>
  );
};

const Field = ({ kind, label, c, italic }: { kind: string; label: string; c: string; italic?: boolean }) => (
  <div className="flex h-[42px] items-center">
    <div className="ml-[32px] mt-[2px] flex w-[50px] items-center justify-center">
      <FieldIcon kind={kind} c={c} />
    </div>
    <span className={`ml-[12px] mt-px text-[23px] leading-[30px] text-[#1a1a1a] ${italic ? "italic tracking-[0.15px]" : "tracking-[0.05px]"}`}>{label}</span>
  </div>
);

const DIMS: [string, string, boolean?][] = [
  ["#", "Customer Id"], ["#", "Exited"], ["Abc", "Gender"], ["globe", "Geography"], ["#", "Has Cr Card"], ["#", "Is Active Member"],
  ["=Abc", "LastDigitOfCustID"], ["#", "Num Of Products"], ["#", "Row Number"], ["Abc", "Surname"], ["Abc", "Measure Names", true],
];
const MEAS: [string, string, boolean?][] = [
  ["#", "Age"], ["#", "Balance"], ["#", "Credit Score"], ["#", "Estimated Salary"], ["#", "Tenure"], ["globe", "Latitude (generated)", true],
  ["globe", "Longitude (generated)", true], ["=#", "Number of Records", true], ["#", "Measure Values", true],
];

const DataPane = () => (
  <div className="flex w-[420px] shrink-0 flex-col border-r-2 border-t-2 border-[#d0d0d0] bg-white text-[#333]">
    <div className="flex h-[56px]">
      <span className="w-[156px] pl-[36px] text-[23px] font-bold leading-[51px] text-[#222]">Data</span>
      <div className="flex flex-1 items-center justify-between border-b-2 border-l-2 border-[#d0d0d0] bg-[#fafafa] pl-[23px] pr-[15px] text-[23px]">
        <span>Analytics</span>
        <Ic w={11} h={15}><path d="M0 6.500h11L5.500 0zM0 8.500h11L5.500 15z" fill="#5f7389" /></Ic>
      </div>
    </div>
    <div className="flex h-[59px] items-center border-b-2 border-[#e0e0e0]">
      <Ic w={33} h={34} className="ml-[40px]">
        <path d="M1 5v14q1 3 6 4M1 5q2-5 9-4 6 0 8 3" stroke="#777" strokeWidth="1.800" />
        <ellipse cx="19" cy="9" rx="9" ry="4.500" stroke="#777" strokeWidth="1.800" />
        <path d="M10 10v16q1 3 6 4M28 10v6M1 5q1 4 7 4M8 20h7M12 16l4 4-4 4" stroke="#777" strokeWidth="1.800" />
        <circle cx="25" cy="25.500" r="7.500" fill="#2f7f9f" />
        <path d="M21.500 25.500l2.500 3 4.500-6" stroke="#fff" strokeWidth="2" />
      </Ic>
      <span className="ml-[11px] whitespace-nowrap text-[23.400px] leading-[30px]">Churn Modelling (P12-C...</span>
    </div>
    <div className="flex h-[53px] items-center text-[23px] font-bold text-black">
      <span className="ml-[36px] mt-[2px] w-[266px]">Dimensions</span>
      <Ic w={24} h={19} className="mt-[-3px]">
        <path d="M0 1.500h24M0 5.500h24M0 9.500h24M0 13.500h24M0 17.500h24" stroke={G} strokeWidth="2" />
        <path d="M5.500 0v19M14.500 0v19" stroke="#fff" strokeWidth="2" />
      </Ic>
      <Ic w={20} h={20} className="ml-[16px] mt-[-3px]">
        <circle cx="12" cy="7.500" r="6" stroke={G} strokeWidth="2" />
        <path d="M8 12l-6.500 7" stroke={G} strokeWidth="2.500" />
      </Ic>
      <div className="ml-[12px] mt-[-3px] h-[36px] w-[2px] bg-[#d8d8d8]" />
      <Ic w={14} h={9} className="ml-[15px] mt-[-2px]"><path d="M0 0h14L7 9z" fill="#555" /></Ic>
    </div>
    <div className="h-[710px]">
      {DIMS.map(([k, l, it]) => <Field key={l} kind={k} label={l} italic={it} c="#3a83a3" />)}
    </div>
    <div className="h-[51px] border-t-2 border-[#e0e0e0] pl-[36px] text-[23px] font-bold leading-[47px] text-black">Measures</div>
    <div>
      {MEAS.map(([k, l, it]) => <Field key={l} kind={k} label={l} italic={it} c="#2aa779" />)}
    </div>
  </div>
);

/* ------------------------------------------------------------------ */
/* Tableau: cards                                                      */
/* ------------------------------------------------------------------ */

const CARD = "border-2 border-[#d4d4d4] bg-[#fafafa]";

const Dots = ({ soft }: { soft?: boolean }) => (
  <Ic w={26} h={26} className={soft ? "opacity-90" : ""}>
    <circle cx="6" cy="6" r="5.600" fill="#846a94" />
    <circle cx="20" cy="6" r="5.600" fill="#fa6e7c" />
    <circle cx="6" cy="20" r="5.600" fill="#f2a579" />
    <circle cx="20" cy="20" r="5.600" fill="#80a4cc" />
  </Ic>
);
const DetailIcon = () => (
  <Ic w={32} h={22}>
    <circle cx="16" cy="5" r="4.500" fill="#666" />
    <circle cx="5" cy="17" r="3.700" stroke="#666" strokeWidth="2" />
    <circle cx="16" cy="17" r="3.700" stroke="#666" strokeWidth="2" />
    <circle cx="27" cy="17" r="3.700" stroke="#666" strokeWidth="2" />
  </Ic>
);

const MarkButton = ({ label, className, children }: { label: string; className: string; children: React.ReactNode }) => (
  <div className={`h-[84px] border-2 border-[#d4d4d4] ${className}`}>
    <div className="flex h-[51px] items-center justify-center">{children}</div>
    <div className="mr-[-2px] ml-[-2px] text-center text-[19.500px] leading-[28px] tracking-[-0.2px]">{label}</div>
  </div>
);

const MarksCard = () => (
  <div className={`${CARD} h-[504px] px-[12px] pt-[14px]`}>
    <div className="pl-px text-[22.500px] leading-[30px]">Marks</div>
    <div className="mt-[26px] flex h-[42px] items-center rounded-[3px] border-2 border-[#cbcbcb] text-[19.500px]">
      <Ic w={37} h={25} className="ml-[16px] mt-[-4px]">
        <path d="M0 1l5-1 8 0.500 0.500 5-3 2 1 3-2.500 3-3-3-2-4-3-2zM9 13.500l4.500 0.500 1.500 2.500-3 7.500-2-0.500-0.500-5zM17 10l6-0.500 2 4-3.500 5.500-2 0-2-5zM17 7l1-4.500 7-2.500 11 1-1 4-3 6.500-2-2-2.500 4-2.500-5-6-1zM30 16l4.500-2 1 4.500-5 0z" fill="#757575" />
      </Ic>
      <span className="ml-[6px] w-[126px]">Automatic</span>
      <div className="h-full w-[2px] bg-[#dedede]" />
      <Ic w={14} h={9} className="ml-[11px]"><path d="M0 0h14L7 9z" fill="#555" /></Ic>
    </div>
    <div className="mt-[12px] flex gap-[12px]">
      <MarkButton label="Color" className="w-[66px]"><Dots /></MarkButton>
      <MarkButton label="Size" className="w-[70px]">
        <Ic w={28} h={28}>
          <circle cx="16.500" cy="12" r="11" stroke="#666" strokeWidth="2" />
          <circle cx="7.500" cy="20" r="6.500" fill="#fafafa" stroke="#666" strokeWidth="2" />
        </Ic>
      </MarkButton>
      <MarkButton label="Label" className="w-[66px]"><TextGlyph /></MarkButton>
    </div>
    <div className="mt-[12px] flex gap-[12px]">
      <MarkButton label="Detail" className="w-[66px]"><DetailIcon /></MarkButton>
      <MarkButton label="Tooltip" className="w-[70px]">
        <Ic w={28} h={26}><path d="M1 1h26v17h-7v6l-6-6H1z" stroke="#666" strokeWidth="2" strokeLinejoin="round" /></Ic>
      </MarkButton>
    </div>
    <div className="mt-[18px] flex flex-col gap-[6px] text-[23px] leading-[39px] text-white">
      <div className="flex h-[40px] items-center"><div className="flex w-[50px] justify-center pl-[4px]"><Dots soft /></div><div className="h-[40px] w-[168px] rounded-full bg-[#00b180] pl-[22px]">SUM(Nu..</div></div>
      <div className="flex h-[40px] items-center"><div className="flex w-[50px] justify-center pl-[4px]"><TextGlyph c="#777" /></div><div className="h-[40px] w-[168px] rounded-full bg-[#00b180] pl-[22px]">SUM(Nu..</div></div>
      <div className="flex h-[40px] items-center"><div className="flex w-[50px] justify-center pl-[4px]"><DetailIcon /></div><div className="h-[40px] w-[168px] rounded-full bg-[#4996b2] pl-[22px]">Geography</div></div>
    </div>
  </div>
);

const Shelf = ({ label, pill, icon }: { label: string; pill: string; icon: React.ReactNode }) => (
  <div className={`${CARD} flex h-[56px] items-center`}>
    <div className="flex h-full w-[250px] items-center border-r-2 border-[#d4d4d4] pl-[13px]">
      {icon}
      <span className="ml-[15px] text-[23px]">{label}</span>
    </div>
    <div className="ml-[4px] h-[40px] w-[296px] rounded-full bg-[#00b180] pl-[21px] text-[23.200px] leading-[40px] text-white">{pill}</div>
  </div>
);

/* ------------------------------------------------------------------ */
/* Tableau: map                                                        */
/* ------------------------------------------------------------------ */

type Pt = [number, number];
const parse = (s: string): Pt[] => s.trim().split(/\s+/).map((p) => p.split(",").map(Number) as Pt);
const hash = (a: Pt, b: Pt, k: number) => {
  const v = Math.sin((a[0] + b[0]) * 12.9898 + (a[1] + b[1]) * 78.233 + k * 37.719) * 43758.5453;
  return v - Math.floor(v) - 0.5;
};
/* Midpoint displacement keyed on the segment, so shared borders get the same wiggle. */
const split = (a: Pt, b: Pt, amp: number): Pt[] => {
  const d = Math.hypot(b[0] - a[0], b[1] - a[1]);
  if (d < 9) return [a];
  const off = Math.min(d, 40) * amp;
  const m: Pt = [(a[0] + b[0]) / 2 + hash(a, b, 1) * off, (a[1] + b[1]) / 2 + hash(a, b, 2) * off];
  return [...split(a, m, amp), ...split(m, b, amp)];
};
const rough = (s: string, closed: boolean, amp = 0.28) => {
  const p = parse(s);
  const out: Pt[] = [];
  for (let i = 0; i < p.length - (closed ? 0 : 1); i++) out.push(...split(p[i], p[(i + 1) % p.length], amp));
  if (!closed) out.push(p[p.length - 1]);
  return "M" + out.map((q) => `${q[0].toFixed(1)} ${q[1].toFixed(1)}`).join("L") + (closed ? "Z" : "");
};

const LAND = [
  "10,105 60,105 95,108 115,95 118,78 92,75 110,40 140,12 215,12 220,38 262,52 283,90 272,118 240,130 236,150 248,180 248,215 240,255 228,272 205,275 150,290 100,318 30,330 10,330",
  "302,58 318,12 510,12 522,60 545,82 580,95 592,125 608,165 610,195 622,205 612,222 640,216 680,218 705,240 706,265 680,305 650,330 655,340 688,345 685,362 640,382 600,388 555,385 500,392 445,398 400,392 365,420 320,425 300,442 272,438 290,425 330,390 355,358 385,350 440,342 452,325 410,338 355,335 360,318 330,318 300,305 325,285 355,280 350,262 330,245 355,235 358,205 330,198 345,180 380,188 425,190 435,165 430,130 442,110 405,115 400,75 375,62",
  "326,118 345,96 350,105 335,122",
  "755,362 790,345 830,320 865,280 875,225 890,200 905,215 900,235 900,262 925,240 920,185 980,175 1028,178 1200,200 1440,145 1475,125 1530,115 1530,880 1500,855 1480,820 1450,800 1425,815 1405,785 1370,768 1335,780 1325,800 1340,845 1370,880 1410,905 1430,945 1455,975 1490,1005 1530,1018 1530,1138 1490,1115 1450,1095 1400,1065 1350,1035 1310,1005 1265,980 1240,955 1218,912 1195,875 1160,855 1115,850 1080,880 1055,890 950,850 800,600",
  "1112,50 1120,12 1240,12 1215,45 1190,62",
  "1250,35 1275,12 1300,40 1340,35 1320,70 1285,75 1258,55",
  "1470,30 1490,28 1495,45 1480,40",
  "1088,1085 1120,1080 1145,1058 1165,1064 1180,1100 1170,1190 1150,1190 1135,1207 1100,1195 1108,1140",
  "1340,1270 1355,1255 1430,1260 1530,1247 1495,1290 1503,1320 1495,1342 1440,1325 1360,1290",
  "195,1520 240,1440 260,1390 290,1395 320,1430 370,1435 430,1430 470,1440 500,1430 555,1390 610,1385 660,1358 780,1345 830,1330 900,1335 960,1322 1010,1325 1060,1322 1115,1326 1170,1304 1200,1312 1215,1335 1250,1325 1230,1360 1240,1390 1258,1430 1225,1470 1200,1520",
  "80,1018 122,1008 150,1018 218,1012 240,1036 203,1070 200,1130 190,1160 165,1160 192,1198 175,1235 192,1255 165,1288 165,1310 130,1322 78,1318 90,1260 80,1230 48,1215 60,1180 75,1140 95,1080",
];
const BORDERS = [
  "178,40 165,50 160,70 140,75 124,92 140,105 160,118 182,118 190,98 205,110 213,125 236,122",
  "425,190 432,205 443,212 430,225 420,240 428,250 415,262 428,275 422,290 435,298 448,320",
  "452,26 440,35 425,45",
  "803,345 850,345 880,335 945,352 960,360 940,380 955,390 975,410",
  "945,480 945,450 965,432 968,455 985,470",
  "1015,745 1070,740 1100,710 1135,745 1160,710 1200,715 1220,680",
  "1170,625 1165,655 1210,675 1320,662 1335,685 1430,705 1517,692",
  "1420,545 1450,550 1490,525 1517,525",
  "1480,375 1517,385",
  "1395,705 1410,740 1405,775 1450,765 1480,775 1512,770",
  "475,1440 495,1460 492,1480 505,1490 507,1507",
  "1115,1328 1110,1340 1088,1352 1102,1360 1092,1390 1098,1440 1090,1465 1070,1480 1048,1500",
];
const SPAIN = [
  "58,940 75,925 115,910 120,898 150,892 185,905 255,905 262,900 290,908 360,915 395,910 435,915 500,920 520,937 600,962 645,963 645,955 690,968 700,978 760,985 795,985 795,1010 770,1025 735,1048 690,1062 665,1068 650,1085 655,1092 640,1100 600,1150 585,1170 595,1200 617,1215 575,1245 555,1275 560,1288 510,1300 495,1325 485,1340 440,1338 345,1342 330,1352 300,1358 290,1375 278,1383 240,1362 225,1330 195,1308 165,1310 165,1288 192,1255 175,1235 192,1198 165,1160 190,1160 200,1130 203,1070 240,1036 218,1012 150,1018 122,1008 80,1015 85,995 68,970 70,950",
  "743,1165 775,1145 800,1148 808,1158 785,1183 765,1170",
  "828,1135 855,1135 857,1148 835,1143",
  "676,1202 697,1193 692,1205 680,1208",
];
const FRANCE = [
  "697,380 755,362 762,380 792,390 800,405 848,425 855,447 885,447 888,435 892,455 945,480 985,485 1000,505 1050,515 1088,522 1065,545 1050,590 1050,630 1020,635 985,680 968,700 965,722 1005,710 1018,740 1010,755 1025,785 1000,800 1018,825 1012,855 1058,865 1050,885 1000,915 995,930 945,935 900,915 845,907 790,935 785,975 785,985 755,985 690,972 645,955 645,963 600,962 520,937 500,918 518,905 528,860 532,770 555,780 540,765 535,718 500,705 478,675 485,655 460,645 455,632 415,625 385,610 348,607 330,590 350,585 330,575 322,558 350,545 400,540 425,533 445,553 515,545 510,505 490,468 528,472 535,490 605,500 615,480 640,465 690,440",
  "1153,945 1163,943 1168,1000 1158,1030 1147,1048 1120,1030 1125,1015 1110,995 1118,972 1150,962",
];
const GERMANY = [
  "1028,160 1080,152 1090,175 1110,140 1150,142 1135,130 1128,100 1112,56 1130,55 1190,62 1195,90 1240,100 1260,95 1243,128 1270,135 1320,115 1345,95 1375,97 1405,110 1440,150 1453,175 1440,220 1468,245 1472,300 1490,350 1480,380 1455,372 1410,385 1360,415 1320,428 1340,460 1345,485 1385,520 1420,540 1415,555 1390,570 1358,587 1375,610 1370,630 1320,620 1260,637 1210,645 1165,622 1115,612 1090,625 1050,630 1050,590 1065,545 1088,522 1050,515 1000,505 985,485 965,440 978,410 955,385 970,340 955,305 1000,300 1020,270 1000,248 1022,240 1028,185 1018,180",
  "1378,95 1392,75 1410,92 1400,108",
  "1415,120 1440,135 1435,142",
  "1092,60 1100,40 1108,55",
];
const INNER_FR = [
  "690,440 705,460 705,505 695,530", "705,508 760,512 805,518 810,545 785,580 700,560 692,530", "855,447 850,485 820,510 808,540",
  "810,570 840,600 890,598 935,620 960,600 1010,620 1020,632", "515,550 545,560 600,555 655,580 690,535", "545,560 540,595 495,610 445,630",
  "655,580 640,620 608,655 550,668 560,712 535,718", "785,580 780,650 770,680 830,715 880,720 960,705", "608,655 690,690 735,710 755,770 730,810",
  "590,940 600,905 590,880 635,878 690,810 730,810 770,828 830,815 870,855 930,855 920,830 1000,800", "870,855 885,880 860,905",
];
const INNER_DE = [
  "1195,90 1225,110 1240,145 1250,185 1230,195", "1165,165 1250,195 1330,185 1390,190 1440,165", "1250,195 1285,215 1325,225 1325,290 1380,325 1480,330",
  "1022,262 1060,265 1090,290 1110,255 1140,260 1145,300", "1240,225 1245,280 1220,310 1235,345", "980,415 1040,390 1070,350 1110,330", "1040,395 1075,430 1080,470 1125,480 1180,465 1205,500 1215,550 1195,615",
  "1190,380 1215,415 1320,425", "1125,480 1100,510 1088,522", "1378,245 1395,238 1408,250 1395,262 1378,255",
];
const INNER_ES = [
  "190,908 195,940 185,960 195,1010", "195,940 250,935 290,940 330,932 370,955 440,925", "440,925 425,970 470,1000 500,1000 560,945", "500,1000 495,1060 510,1100 520,1150",
  "645,965 645,1020 615,1060 610,1120", "205,1120 280,1125 300,1155 340,1145 420,1140 440,1080 490,1060", "300,1155 325,1175 310,1215 280,1250 195,1255", "310,1215 340,1235 440,1240 500,1235 540,1245 555,1275",
  "520,1150 530,1195 550,1230",
];

const Shapes = ({ list, fill, stroke, width }: { list: string[]; fill: string; stroke: string; width: number }) => (
  <>
    {list.map((s) => <path key={s} d={rough(s, true)} fill={fill} stroke={stroke} strokeWidth={width} vectorEffect="non-scaling-stroke" />)}
  </>
);
const Lines = ({ list, stroke, width = 1.3 }: { list: string[]; stroke: string; width?: number }) => (
  <>
    {list.map((s) => <path key={s} d={rough(s, false, 0.5)} stroke={stroke} strokeWidth={width} vectorEffect="non-scaling-stroke" />)}
  </>
);

const MapView = () => (
  <svg width={726} height={870} viewBox="0 0 724 870" fill="none" className="block border-2 border-[#e4e4e4] bg-white font-[Inter]">
    <g transform="scale(0.4847 0.587) translate(-22 -24)">
      <Shapes list={LAND} fill="#f5f5f5" stroke="#f7f7f7" width={5} />
      <Shapes list={LAND} fill="#e8e8e8" stroke="none" width={0} />
      <Lines list={BORDERS} stroke="#f6f6f6" width={5} />
      <Lines list={BORDERS} stroke="#a0a0a0" width={1.5} />
      <Shapes list={[...SPAIN, ...GERMANY, ...FRANCE]} fill="none" stroke="#f7f7f7" width={7} />
      <Shapes list={[...SPAIN, ...GERMANY]} fill="#c4e5dd" stroke="#6f7f7c" width={1.3} />
      <Shapes list={FRANCE} fill="#4f7499" stroke="#5c6d7e" width={1.2} />
      <Lines list={INNER_FR} stroke="#44688d" />
      <Lines list={[...INNER_DE, ...INNER_ES]} stroke="#b4d6cf" />
      <circle cx="1338" cy="878" r="3" stroke="#888" strokeWidth="1.500" vectorEffect="non-scaling-stroke" />
    </g>
    <g fontSize="26" fontWeight="500" textAnchor="middle">
      <text x="569" y="184" fill="#a5c4bd">Germany</text>
      <text x="356" y="391" fill="#35577c">France</text>
      <text x="185" y="628" fill="#a5c4bd">Spain</text>
      <text x="601" y="485" fill="#858585" stroke="#f4f4f4" strokeWidth="4" paintOrder="stroke">Italy</text>
    </g>
    <g fontSize="24.5" fontWeight="600" textAnchor="middle" fill="#000">
      <text x="570" y="196">2,509</text>
      <text x="355" y="402">5,014</text>
      <text x="187" y="640">2,477</text>
    </g>
  </svg>
);

/* ------------------------------------------------------------------ */
/* Tableau: bottom bars                                                */
/* ------------------------------------------------------------------ */

const NewTabIcon = ({ kind }: { kind: number }) => (
  <Ic w={30} h={30}>
    {kind === 0 && <path d="M15 23H1V2h20v11M7 18v-4M11.500 18V8M16 14v-4" stroke={G} strokeWidth="2" />}
    {kind === 1 && <path d="M14 23H1V2h20v11M1 12.500h20M10 2v21" stroke={G} strokeWidth="2" />}
    {kind === 2 && <path d="M12 25L1 20V2l11 4 10-4v11M12 6v10" stroke={G} strokeWidth="2" />}
    <Plus x={22} y={23} r={7} c={G} s={3.800} />
  </Ic>
);

const TabBar = () => (
  <div className="flex h-[62px] shrink-0 items-stretch border-b-2 border-t-2 border-[#cdcdcd] bg-[#e6e6e6] text-[23px] leading-[59px] text-[#555]">
    <div className="flex w-[261px] items-center border-r border-[#c8c8c8]">
      <Ic w={17} h={24} className="ml-[19px] mt-[-3px]">
        <ellipse cx="8.500" cy="5" rx="7" ry="3.800" stroke="#666" strokeWidth="1.800" />
        <path d="M1.500 5v13q1 4 7 4t7-4V5" stroke="#666" strokeWidth="1.800" />
      </Ic>
      <span className="ml-[12px]">Data Source</span>
    </div>
    <span className="w-[76px] bg-[#fafafa] pl-[13px] font-bold text-[#444]">Map</span>
    <span className="w-[115px] border-r border-[#c8c8c8] pl-[13px]">Sheet 2</span>
    <span className="w-[120px] border-r border-[#c8c8c8] pl-[12px]">Country</span>
    <span className="w-[158px] whitespace-nowrap border-r border-[#c8c8c8] pl-[12px]">Credit Card</span>
    <span className="w-[199px] whitespace-nowrap border-r border-[#c8c8c8] pl-[12px]">Active Member</span>
    <span className="w-[219px] whitespace-nowrap border-r border-[#c8c8c8] pl-[12px]">Num of Products</span>
    <span className="w-[142px] border-r border-[#c8c8c8] pl-[12px]">Validation</span>
    {[0, 1, 2].map((k) => (
      <div key={k} className="flex w-[63.500px] items-center justify-center border-r border-[#c8c8c8]"><NewTabIcon kind={k} /></div>
    ))}
  </div>
);

const StatusBar = () => (
  <div className="flex h-[40px] shrink-0 items-stretch bg-[#ebebeb] text-[19.800px] leading-[40px] text-[#1a1a1a]">
    <span className="ml-[25px] w-[106px]">3 marks</span>
    <span className="w-[199px]">1 row by 1 column</span>
    <span className="w-[578px]">SUM(Number of Records): 10,000</span>
    <div className="flex w-[255px] items-center border-l-2 border-r-2 border-[#d0d0d0] text-[19px]">
      <Ic w={22} h={26} className="ml-[11px]">
        <circle cx="11" cy="6" r="4.800" stroke="#555" strokeWidth="2" />
        <path d="M2 24.500q-1-10 5-10h8q6 0 5 10z" stroke="#555" strokeWidth="2" />
      </Ic>
      <span className="ml-[18px] w-[172px]">Jacob Hurt</span>
      <Ic w={13} h={8}><path d="M0 0h13L6.500 8z" fill="#111" /></Ic>
    </div>
    <div className="w-[54px] border-r border-[#cfcfcf]" />
    <div className="w-[55px] border-r border-[#cfcfcf]" />
    <div className="w-[93px] border-r-2 border-[#d0d0d0]" />
    <div className="flex w-[142px] items-center justify-center gap-[22px] border-r border-[#cfcfcf]">
      <Ic w={12} h={14}><path d="M1 0v14M12 0v14L3 7z" stroke="#b9b9b9" fill="#b9b9b9" /></Ic>
      <Ic w={9} h={14}><path d="M9 0v14L0 7z" fill="#b9b9b9" /></Ic>
      <Ic w={9} h={14}><path d="M0 0v14l9-7z" fill="#b9b9b9" /></Ic>
      <Ic w={12} h={14}><path d="M11 0v14M0 0v14l9-7z" stroke="#b9b9b9" fill="#b9b9b9" /></Ic>
    </div>
    <Ic w={23} h={22} className="ml-[17px] mt-[9px]"><path d="M0 0h6v6H0zM8.500 0h6v6h-6zM17 0h6v6h-6zM0 8h6v6H0zM8.500 8h6v6h-6zM17 8h6v6h-6zM0 16h6v6H0zM8.500 16h6v6h-6zM17 16h6v6h-6z" fill="#b9b9b9" /></Ic>
    <Ic w={23} h={22} className="ml-[19px] mt-[9px]"><path d="M0 0h23v14H0zM0 16h6v6H0zM8.500 16h6v6h-6zM17 16h6v6h-6z" fill="#b9b9b9" /></Ic>
    <Ic w={22} h={22} className="ml-[19px] mt-[9px]"><path d="M0 0h22v22H0z" fill="#5f5f5f" /></Ic>
  </div>
);

const Tableau = () => (
  <div className="flex h-full w-[1660px] flex-col bg-[#f4f4f4] text-[#333]">
    <Toolbar />
    <div className="flex h-[1918px] shrink-0">
      <DataPane />
      <div className="ml-[12px] flex w-[254px] shrink-0 flex-col gap-[12px] text-[22.500px] leading-[30px]">
        <div className={`${CARD} h-[124px] pl-[13px] pt-[14px]`}>Pages</div>
        <div className={`${CARD} h-[156px] pl-[13px] pt-[14px]`}>Filters</div>
        <MarksCard />
      </div>
      <div className="ml-[12px] flex w-[950px] shrink-0 flex-col gap-[12px]">
        <Shelf label="Columns" pill="Longitude (generated)" icon={<Ic w={21} h={24}><path d="M2 0v3.500M10.500 0v3.500M19 0v3.500M2 6v18M10.500 6v18M19 6v18" stroke={G} strokeWidth="4" /></Ic>} />
        <Shelf label="Rows" pill="Latitude (generated)" icon={<Ic w={24} h={20} className="mr-[-3px]"><path d="M0 2h4M0 10h4M0 18h4M6.500 2H24M6.500 10H24M6.500 18H24" stroke={G} strokeWidth="3.800" /></Ic>} />
        <div className="flex items-start gap-[12px]">
          <div className="h-[1769px] w-[750px] border-2 border-[#d4d4d4] bg-white">
            <div className="h-[86px] pl-[20px] pt-[26px] text-[39px] font-light leading-[49px] tracking-[-0.3px]">Map</div>
            <div className="ml-[10px] w-[726px]">
              <MapView />
              <div className="mt-[6px] h-[30px] border-y border-[#e4e4e4] bg-[#fafafa] pl-[196px] pt-[7px]">
                <div className="h-[16px] w-[375px] rounded-full bg-[#c1c1c1]" />
              </div>
            </div>
          </div>
          <div className="h-[142px] w-[188px] border-2 border-[#d4d4d4] bg-white text-[23px]">
            <div className="h-[58px] bg-[#fafafa] pl-[12px] leading-[59px]">SUM(Numb...</div>
            <div className="mx-[7px] mt-[7px] h-[32px] w-[168px] border-2 border-[#aaa495] bg-linear-to-r from-[#c4e5dd] via-[#49a4bd] to-[#335f8c]" />
            <div className="mx-[7px] flex justify-between leading-[42px] tabular-nums tracking-[-0.3px]"><span>2,477</span><span>5,014</span></div>
          </div>
        </div>
      </div>
    </div>
    <TabBar />
    <StatusBar />
  </div>
);

export default function App() {
  return (
    <div className="flex h-[2100px] w-[3360px] overflow-hidden bg-black font-[Inter,sans-serif]">
      <Excel />
      <div className="flex w-[24px] shrink-0 items-center justify-center bg-black">
        <div className="h-[128px] w-[8px] rounded-full bg-[#8f8f8f]" />
      </div>
      <Tableau />
    </div>
  );
}
